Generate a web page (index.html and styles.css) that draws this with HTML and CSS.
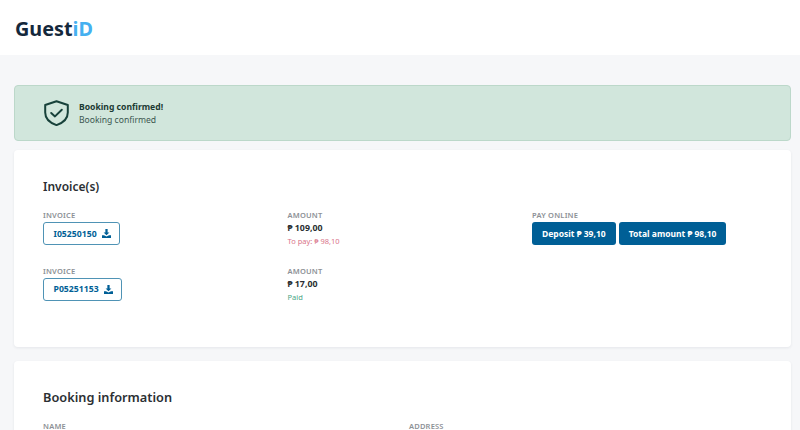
FILE: index.html
```html
<!DOCTYPE html>
<html lang="en">
<head>
<meta charset="utf-8">
<title>GuestID</title>
<link rel="stylesheet" href="styles.css">
</head>
<body>
<header class="header"><div class="logo">Guest<span class="logo-id">iD</span></div></header>
<main class="main">
  <section class="alert">
    <svg class="alert-icon" width="25" height="26" viewBox="0 0 25 26" fill="none" stroke="#17413a" stroke-width="2" stroke-linejoin="round" stroke-linecap="round"><path d="M12.5 1.2 23.8 5V12.5c0 6-4.2 10.2-11.3 12.6C5.4 22.7 1.2 18.5 1.2 12.5V5Z"/><path d="M7.2 13 11 16.4 17.8 9.8"/></svg>
    <div class="alert-text">
      <div class="alert-title">Booking confirmed!</div>
      <div class="alert-sub">Booking confirmed</div>
    </div>
  </section>
  <section class="card card-invoices">
    <h2 class="card-title">Invoice(s)</h2>
    <div class="invoice-grid">
      <div class="cell">
        <div class="label">INVOICE</div>
        <a class="btn-outline">I05250150<svg class="dl" width="9" height="9" viewBox="0 0 12 12" fill="#005f96"><path d="M4.5 0h3v4.5h2.4L6 8.4 2.1 4.5h2.4Z"/><path d="M0 8.2h2.6L6 10l3.4-1.8H12V12H0Z"/></svg></a>
      </div>
      <div class="cell">
        <div class="label">AMOUNT</div>
        <div class="amount">₱ 109,00</div>
        <div class="status status-due">To pay: ₱ 98,10</div>
      </div>
      <div class="cell">
        <div class="label">PAY ONLINE</div>
        <div class="pay-buttons"><a class="btn-solid">Deposit ₱ 39,10</a><a class="btn-solid">Total amount ₱ 98,10</a></div>
      </div>
      <div class="cell">
        <div class="label">INVOICE</div>
        <a class="btn-outline">P05251153<svg class="dl" width="9" height="9" viewBox="0 0 12 12" fill="#005f96"><path d="M4.5 0h3v4.5h2.4L6 8.4 2.1 4.5h2.4Z"/><path d="M0 8.2h2.6L6 10l3.4-1.8H12V12H0Z"/></svg></a>
      </div>
      <div class="cell">
        <div class="label">AMOUNT</div>
        <div class="amount">₱ 17,00</div>
        <div class="status status-paid">Paid</div>
      </div>
    </div>
  </section>
  <section class="card card-booking">
    <h2 class="card-title card-title-lg">Booking information</h2>
    <div class="info-grid">
      <div class="label">NAME</div>
      <div class="label">ADDRESS</div>
    </div>
  </section>
</main>
</body>
</html>
```
FILE: styles.css
```css
* { box-sizing: border-box; }
html, body { margin: 0; height: 430px; overflow: hidden; }
body { background: #f6f7f9; font-family: "Noto Sans", sans-serif; color: #2b2f33; }
.header { height: 55px; background: #fff; padding: 13px 15px 0; }
.logo { font-size: 19.8px; line-height: 32px; font-weight: 700; color: #14283c; }
.logo-id { color: #45b0f0; }
.main { padding: 30px 9px 0 14px; display: flex; flex-direction: column; }
.alert { height: 56px; background: #d1e6dc; border: 1px solid #bcd8ca; border-radius: 4px; display: flex; align-items: center; gap: 10px; padding: 0 0 0 29px; margin-bottom: 9px; }
.alert-icon { flex: none; }
.alert-text { padding-top: 2px; }
.alert-title { font-size: 8.6px; line-height: 13px; font-weight: 700; color: #1c3a33; }
.alert-sub { font-size: 8.6px; line-height: 13px; color: #3c5750; }
.card { background: #fff; border-radius: 4px; box-shadow: 0 1px 3px rgba(30,40,60,.08); padding: 0 29px; }
.card-invoices { height: 197px; padding-top: 28px; margin-bottom: 14px; }
.card-booking { height: 120px; padding-top: 27px; }
.card-title { margin: 0 0 14px; font-size: 12px; line-height: 18px; font-weight: 600; color: #2b2f33; }
.card-title-lg { font-size: 12.75px; margin-bottom: 14px; line-height: 19px; }
.invoice-grid { display: grid; grid-template-columns: repeat(3, 244.5px); row-gap: 9.5px; }
.cell { height: 46px; }
.label { font-size: 7.5px; line-height: 11px; font-weight: 600; color: #8d9196; letter-spacing: .2px; }
.btn-outline { margin-top: 1px; display: flex; width: fit-content; align-items: center; gap: 5px; height: 23px; padding: 0 8px 0 9.5px; border: 1px solid #4f93b5; border-radius: 3px; font-size: 8.7px; font-weight: 700; color: #005f96; background: #fff; }
.dl { flex: none; }
.amount { margin-top: 1px; font-size: 8.8px; line-height: 13px; font-weight: 700; color: #2b2f33; }
.status { font-size: 7.5px; line-height: 12px; }
.status-due { color: #d9748a; }
.status-paid { color: #4aa585; }
.pay-buttons { margin-top: 1px; display: flex; gap: 3px; }
.btn-solid { display: flex; align-items: center; height: 23px; padding: 0 10px; background: #005f96; border-radius: 3px; color: #fff; font-size: 8.5px; font-weight: 700; }
.info-grid { display: grid; grid-template-columns: 366px 1fr; }
```
